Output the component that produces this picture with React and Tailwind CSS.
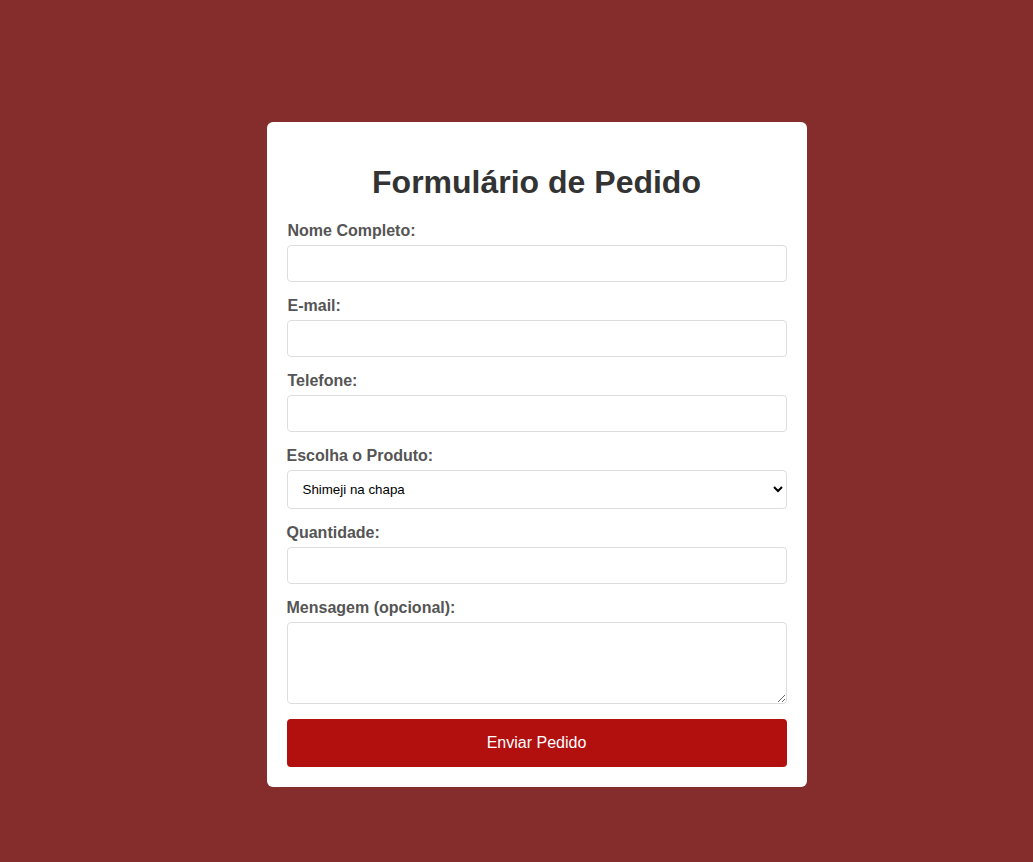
import React from 'react';

const fields = [
  { label: 'Nome Completo:', type: 'text' },
  { label: 'E-mail:', type: 'email' },
  { label: 'Telefone:', type: 'tel' },
];

export default function App() {
  return (
    <div className="min-h-screen bg-[#852d2d] flex justify-center pt-[122px] pl-10 font-['Liberation_Sans',Arial,sans-serif]">
      <div className="w-[540px] h-[665px] bg-white rounded-[6px] p-5">
        <h1 className="text-[32px] leading-[37px] font-bold text-[#333] text-center mt-[22px] mb-[21px]">Formulário de Pedido</h1>
        <form className="flex flex-col" onSubmit={(e) => e.preventDefault()}>
          {fields.map((f, i) => (
            <div key={i} className="flex flex-col">
              <label className="text-base leading-[18px] font-bold text-[#555] mb-[5px] pl-px">{f.label}</label>
              <input type={f.type} className="h-[37px] border border-[#ddd] rounded-[4px] px-2 mb-[15px] outline-none" />
            </div>
          ))}
          <label className="text-base leading-[18px] font-bold text-[#555] mb-[5px]">Escolha o Produto:</label>
          <select className="h-[39px] border border-[#ddd] rounded-[4px] pl-[11px] pr-2 mb-[15px] text-[13.33px] text-black bg-white outline-none">
            <option>Shimeji na chapa</option>
          </select>
          <label className="text-base leading-[18px] font-bold text-[#555] mb-[5px]">Quantidade:</label>
          <input type="number" className="h-[37px] border border-[#ddd] rounded-[4px] px-2 mb-[15px] outline-none" />
          <label className="text-base leading-[18px] font-bold text-[#555] mb-[5px]">Mensagem (opcional):</label>
          <textarea className="h-[82px] border border-[#ddd] rounded-[4px] px-2 mb-[15px] outline-none" />
          <button type="submit" className="h-12 bg-[#b20f0f] text-white text-base rounded-[4px]">Enviar Pedido</button>
        </form>
      </div>
    </div>
  );
}
